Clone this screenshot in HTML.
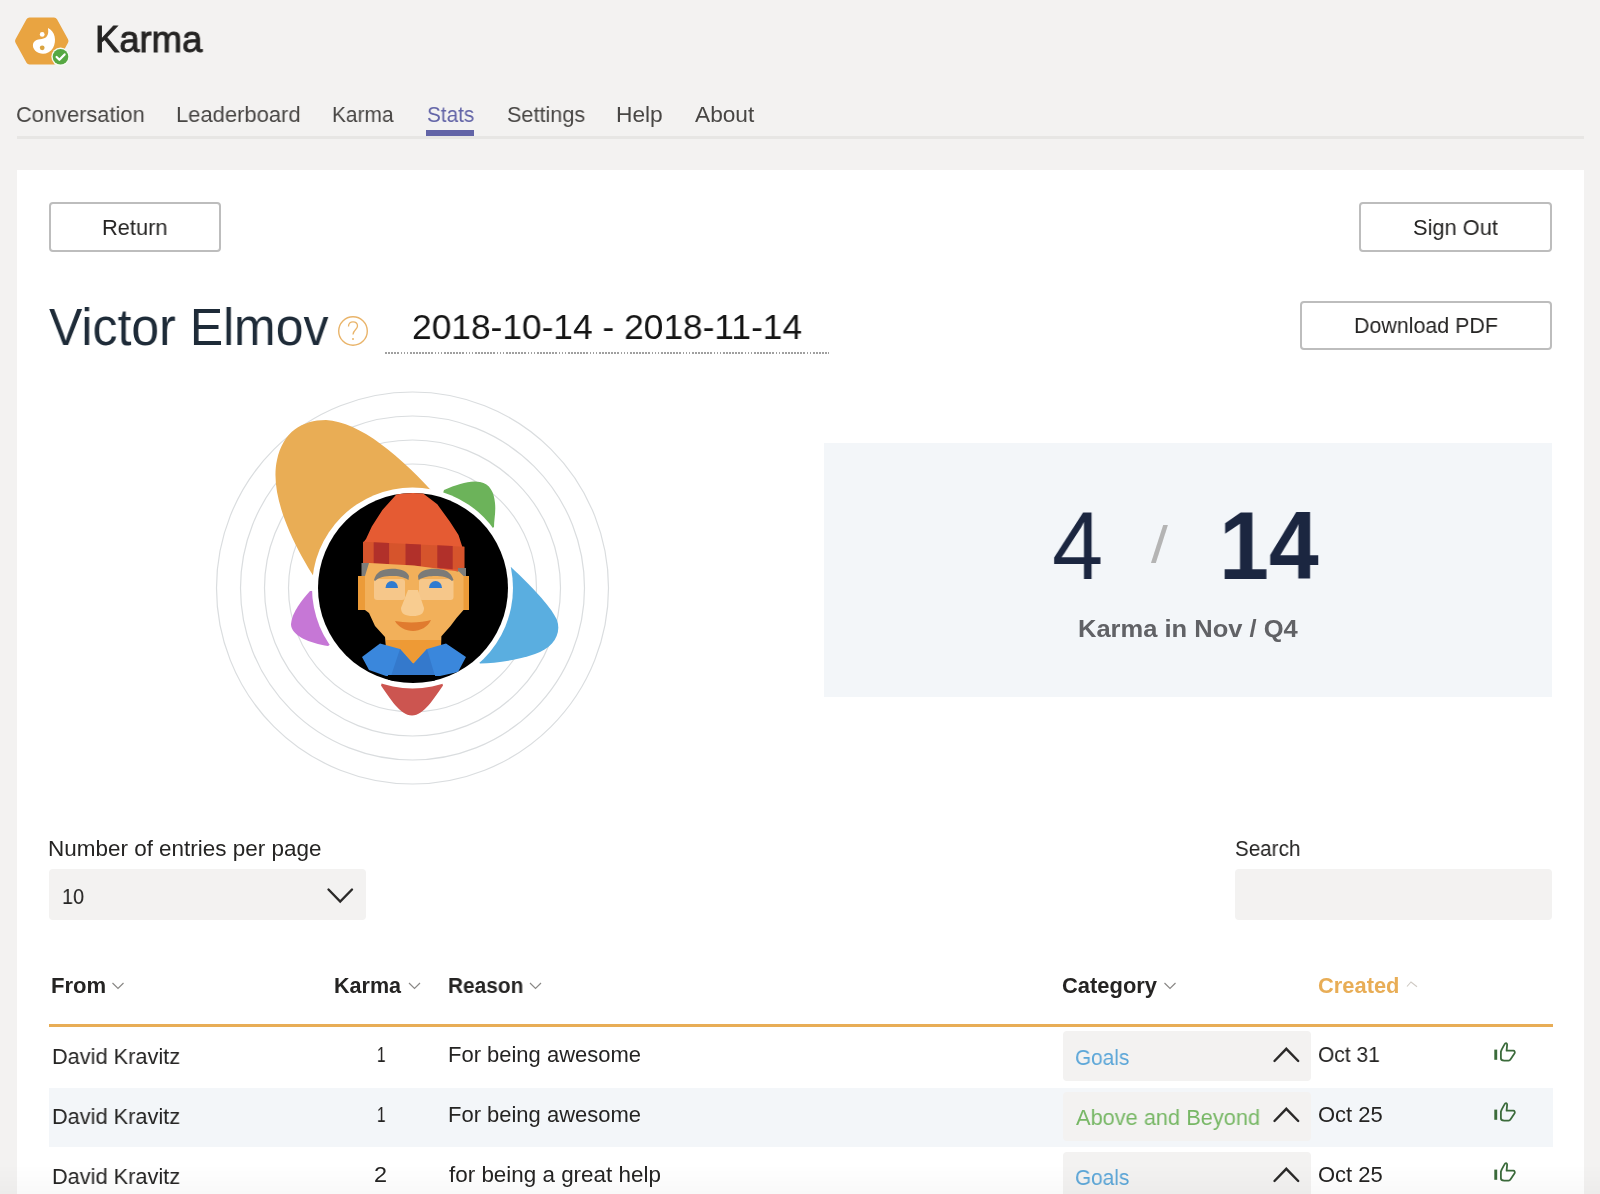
<!DOCTYPE html>
<html><head><meta charset="utf-8">
<style>
html,body{margin:0;padding:0;}
body{width:1600px;height:1194px;overflow:hidden;position:relative;background:#f3f2f1;font-family:"Liberation Sans",sans-serif;}
.t{position:absolute;white-space:nowrap;transform-origin:0 0;will-change:transform;}
.b{position:absolute;box-sizing:border-box;}
</style></head><body>
<!-- logo -->
<svg class="b" style="left:0;top:0" width="90" height="80" viewBox="0 0 90 80">
  <path d="M29.5 17.5 L54 17.5 Q56 17.5 57 19.3 L68 39.3 Q69 41 68 42.7 L57 62.7 Q56 64.5 54 64.5 L29.5 64.5 Q27.5 64.5 26.5 62.7 L15.5 42.7 Q14.5 41 15.5 39.3 L26.5 19.3 Q27.5 17.5 29.5 17.5 Z" fill="#e9a441"/>
  <path d="M48 28 C55 31 57 41 53 48 C50 53 44 55 39 53 C33 51 31 44 35 41 C39 38 45 40 47 36 C49 33 48 30 48 28 Z" fill="#fff"/>
  <circle cx="42.2" cy="34.4" r="2.4" fill="#fff"/>
  <circle cx="42.2" cy="47.8" r="2.4" fill="#d9a441"/>
  <circle cx="60.5" cy="56.8" r="9.2" fill="#f7fbf4"/>
  <circle cx="60.5" cy="56.8" r="7.8" fill="#56a843"/>
  <path d="M56.6 57 L59.4 59.8 L64.6 54.4" stroke="#fff" stroke-width="2.2" fill="none" stroke-linecap="round" stroke-linejoin="round"/>
</svg>
<!-- nav underline + divider -->
<div class="b" style="left:426px;top:130px;width:48px;height:6px;background:#6264a7"></div>
<div class="b" style="left:17px;top:136px;width:1567px;height:2.5px;background:#e7e6e4"></div>
<!-- white panel -->
<div class="b" style="left:17px;top:170px;width:1567px;height:1024px;background:#fff"></div>
<!-- buttons -->
<div class="b" style="left:49px;top:201.5px;width:172px;height:50px;border:2.5px solid #bdbdbd;border-radius:4px"></div>
<div class="b" style="left:1359px;top:202px;width:193px;height:49.5px;border:2.5px solid #bdbdbd;border-radius:4px"></div>
<div class="b" style="left:1300px;top:300.5px;width:252px;height:49.5px;border:2.5px solid #bdbdbd;border-radius:4px"></div>
<!-- question icon -->
<svg class="b" style="left:330px;top:310px" width="46" height="46" viewBox="0 0 46 46">
  <circle cx="23" cy="21" r="14.3" fill="none" stroke="#e9b46a" stroke-width="1.4"/>
  <path d="M18.5 16.5 C18.5 13.5 20.5 11.8 23 11.8 C25.7 11.8 27.5 13.6 27.5 16 C27.5 19.5 23 20 23 24.5" fill="none" stroke="#e9b46a" stroke-width="1.3"/>
  <circle cx="23" cy="29" r="1" fill="#e9b46a"/>
</svg>
<!-- date dotted underline -->
<div class="b" style="left:385px;top:352px;width:444px;height:2px;background:repeating-linear-gradient(to right,#a0a0a0 0,#a0a0a0 1.7px,transparent 1.7px,transparent 3.1px)"></div>
<svg class="b" style="left:0;top:0" width="1600" height="800" viewBox="0 0 1600 800">
  <defs><clipPath id="av"><circle cx="413" cy="588" r="95"/></clipPath></defs>
  <g fill="none" stroke="#dadddf" stroke-width="1.2">
    <circle cx="412.5" cy="588" r="196"/>
    <circle cx="412.5" cy="588" r="172"/>
    <circle cx="412.5" cy="588" r="148"/>
    <circle cx="412.5" cy="588" r="124"/>
  </g>
  <path d="M412.5 588 L330 600 C300 560 268 500 277 460 C283 432 302 420 326 420 C360 422 400 455 440 500 Z" fill="#e9ad55"/>
  <path d="M412.5 588 L444 490 C458 484 470 480 480 482 C490 484 494 492 495 503 C496 512 494 520 494 527 Z" fill="#6cb35a"/>
  <path d="M412.5 588 L511 567 C530 585 550 605 557 620 C562 635 552 648 535 654 C515 661 495 663 480 663.5 Z" fill="#5aaee0"/>
  <path d="M412.5 588 L381 685.5 C390 698 400 715.5 412 715.5 C424 715.5 434 698 443 685.5 Z" fill="#cc5550"/>
  <path d="M412.5 588 L310 591 C302 600 292 612 291 624 C291 636 310 643 328 646 Z" fill="#c677d6"/>
  <circle cx="412.5" cy="588" r="100.5" fill="#fff"/>
  <circle cx="413" cy="588" r="95" fill="#000"/>
  <g clip-path="url(#av)">
    <!-- hat -->
    <path d="M396.8 490 L423.8 490 L423.8 494 L437.3 504.3 L449.8 521.6 L458.5 535 L462.3 546.7 L464.3 546.7 L464.3 572 L363.1 564 L363.1 542.8 L366 539 L371.8 526.4 L382.4 510 L396.8 494 Z" fill="#e55b33"/>
    <path d="M363.1 541.8 L464.3 546.7 L464.3 570 L363.1 563 Z" fill="#d6542c"/>
    <path d="M373.7 542.3 L389.1 543 L389.1 564 L373.7 563.5 Z" fill="#b1302a"/>
    <path d="M405.5 543.8 L420.9 544.5 L420.9 566.2 L405.5 565.2 Z" fill="#b1302a"/>
    <path d="M437.3 545.2 L452.7 546 L452.7 569.2 L437.3 567.7 Z" fill="#b1302a"/>
    <!-- hair -->
    <rect x="361.5" y="563" width="9" height="14" fill="#7d7d7a"/>
    <rect x="458" y="568" width="8" height="10" fill="#7d7d7a"/>
    <!-- ears -->
    <rect x="358" y="576" width="10" height="34" fill="#ec9b38"/>
    <rect x="459" y="576" width="10" height="34" fill="#ec9b38"/>
    <!-- face -->
    <path d="M369 563 L414 565.5 L459 571.5 L463.5 576 L463.5 610 L456.5 618 L450.5 626 L441.4 636.3 L441 648 L386 648 L385 637 L375 626 L369 613 L365 610 L365 576 Z" fill="#f2b05a"/>
    <!-- neck -->
    <path d="M386 640 L441 640 L441 648 L413.3 664 L386 648 Z" fill="#ee9a35"/>
    <!-- shirt -->
    <path d="M362 657 L380 643.5 L400 649 L413.3 664 L427 649 L446 643.5 L466 657 L458 672 L440 676 L386 676 L369 670 Z" fill="#3a87dc"/>
    <path d="M400 649 L413.3 664 L427 649 L435 676 L391 676 Z" fill="#3479cc"/>
    <rect x="388" y="675" width="47" height="6" fill="#000"/>
    <!-- glasses -->
    <rect x="374" y="579" width="31" height="21" rx="3" fill="#f6c78a"/>
    <rect x="419" y="579" width="34.5" height="21" rx="3" fill="#f6c78a"/>
    <!-- eyebrows -->
    <path d="M374 580 C376 572 382 568.8 392 568.8 C401 568.8 407 571 409 576 L408.5 580 C403 576.5 398 576 392 576 C385 576 379 577 375 581 Z" fill="#7b7b78"/>
    <path d="M418 576 C420 571 426 568.8 435 568.8 C445 568.8 451 572 453.5 580 L452 581 C448 577 442 576 435 576 C430 576 424 576.5 418.5 580 Z" fill="#7b7b78"/>
    <!-- eyes -->
    <path d="M385.5 588 A6.2 7 0 0 1 398 588 Z" fill="#2f7bd0"/>
    <path d="M429 588 A6.5 7 0 0 1 442 588 Z" fill="#2f7bd0"/>
    <!-- nose -->
    <path d="M408 590 L418 590 L424 608 C424 614 420 616 413 616 C405 616 401 614 401 608 Z" fill="#f8cc90"/>
    <!-- mouth -->
    <path d="M395 621 C405 623 422 623 431 620 C428 627 420 631 413 631 C406 631 398 627 395 621 Z" fill="#e07b2f"/>
  </g>
</svg>

<!-- stats box -->
<div class="b" style="left:824px;top:443px;width:728px;height:254px;background:#f3f6f9"></div>
<!-- select -->
<div class="b" style="left:49px;top:869px;width:317px;height:50.5px;background:#f3f2f1;border-radius:4px"></div>
<svg class="b" style="left:320px;top:880px" width="40" height="30" viewBox="0 0 40 30">
  <path d="M8.5 9.5 L20.2 21.5 L32 9.5" fill="none" stroke="#2b2a29" stroke-width="2.4" stroke-linecap="round"/>
</svg>
<div class="b" style="left:1235px;top:869px;width:317px;height:50.5px;background:#f3f2f1;border-radius:4px"></div>
<!-- header chevrons -->
<svg class="b" style="left:0;top:970px" width="1600" height="40" viewBox="0 970 1600 40">
  <g fill="none" stroke="#8a8886" stroke-width="1.2">
    <path d="M112.5 983 L118 988.5 L123.5 983"/>
    <path d="M409 983 L414.5 988.5 L420 983"/>
    <path d="M530 983 L535.5 988.5 L541 983"/>
    <path d="M1164.5 983 L1170 988.5 L1175.5 983"/>
  </g>
  <path d="M1407 986.5 L1411 982 L1417 986.7" fill="none" stroke="#cfcac4" stroke-width="1.1"/>
</svg>
<!-- orange rule -->
<div class="b" style="left:48.5px;top:1024px;width:1504px;height:3px;background:#e8ad56"></div>
<!-- row bg -->
<div class="b" style="left:48.5px;top:1088px;width:1504px;height:59px;background:#f3f6f9"></div>
<!-- category boxes -->
<div class="b" style="left:1062.5px;top:1031px;width:248px;height:50px;background:#f3f2f1;border-radius:4px"></div>
<div class="b" style="left:1062.5px;top:1091.5px;width:248px;height:49.5px;background:#f3f2f1;border-radius:4px"></div>
<div class="b" style="left:1062.5px;top:1151.5px;width:248px;height:50px;background:#f3f2f1;border-radius:4px"></div>
<svg class="b" style="left:0;top:1030px" width="1600" height="164" viewBox="0 1030 1600 164">
  <g fill="none" stroke="#2b2a29" stroke-width="2.4" stroke-linecap="round">
    <path d="M1274.5 1061 L1286.3 1048.8 L1298.2 1061"/>
    <path d="M1274.5 1121 L1286.3 1108.8 L1298.2 1121"/>
    <path d="M1274.5 1181 L1286.3 1168.8 L1298.2 1181"/>
  </g>
  <g id="thumbs" fill="none" stroke="#3b6b3b" stroke-width="1.8" stroke-linejoin="round">
    <g transform="translate(1494 1042)"><path d="M6.9 9.6 L6.9 16.3 C6.9 17.6 8.5 18.6 10.2 18.6 L14.6 18.6 C15.6 18.6 16.2 18 16.6 17.2 L20.6 11.3 C21.2 10.2 20.5 8.7 19.5 8.7 L12.6 8.7 L13.1 3.2 C13.3 1.8 12.6 1.1 12 1.1 C11.4 1.1 10.9 1.6 10.5 2.4 L7.8 7.4 Z"/><rect x="0.3" y="7.6" width="2.9" height="10.2" fill="#3b6b3b" stroke="none"/></g>
    <g transform="translate(1494 1102)"><path d="M6.9 9.6 L6.9 16.3 C6.9 17.6 8.5 18.6 10.2 18.6 L14.6 18.6 C15.6 18.6 16.2 18 16.6 17.2 L20.6 11.3 C21.2 10.2 20.5 8.7 19.5 8.7 L12.6 8.7 L13.1 3.2 C13.3 1.8 12.6 1.1 12 1.1 C11.4 1.1 10.9 1.6 10.5 2.4 L7.8 7.4 Z"/><rect x="0.3" y="7.6" width="2.9" height="10.2" fill="#3b6b3b" stroke="none"/></g>
    <g transform="translate(1494 1162)"><path d="M6.9 9.6 L6.9 16.3 C6.9 17.6 8.5 18.6 10.2 18.6 L14.6 18.6 C15.6 18.6 16.2 18 16.6 17.2 L20.6 11.3 C21.2 10.2 20.5 8.7 19.5 8.7 L12.6 8.7 L13.1 3.2 C13.3 1.8 12.6 1.1 12 1.1 C11.4 1.1 10.9 1.6 10.5 2.4 L7.8 7.4 Z"/><rect x="0.3" y="7.6" width="2.9" height="10.2" fill="#3b6b3b" stroke="none"/></g>
  </g>
</svg>
<div class="t" style="left:95.20px;top:21.88px;font-size:36.70px;line-height:36.70px;font-weight:normal;color:#252423;transform:scaleX(0.9927);-webkit-text-stroke:0.9px #252423;">Karma</div>
<div class="t" style="left:16.48px;top:103.36px;font-size:22.67px;line-height:22.67px;font-weight:normal;color:#484644;transform:scaleX(0.9637);">Conversation</div>
<div class="t" style="left:176.28px;top:103.36px;font-size:22.67px;line-height:22.67px;font-weight:normal;color:#484644;transform:scaleX(0.9693);">Leaderboard</div>
<div class="t" style="left:332.37px;top:103.36px;font-size:22.67px;line-height:22.67px;font-weight:normal;color:#484644;transform:scaleX(0.9209);">Karma</div>
<div class="t" style="left:427.15px;top:103.36px;font-size:22.67px;line-height:22.67px;font-weight:normal;color:#6264a7;transform:scaleX(0.9154);">Stats</div>
<div class="t" style="left:506.82px;top:103.36px;font-size:22.67px;line-height:22.67px;font-weight:normal;color:#484644;transform:scaleX(0.9551);">Settings</div>
<div class="t" style="left:616.02px;top:103.36px;font-size:22.67px;line-height:22.67px;font-weight:normal;color:#484644;transform:scaleX(1.0036);">Help</div>
<div class="t" style="left:695.30px;top:103.36px;font-size:22.67px;line-height:22.67px;font-weight:normal;color:#484644;transform:scaleX(1.0011);">About</div>
<div class="t" style="left:102.30px;top:216.51px;font-size:21.97px;line-height:21.97px;font-weight:normal;color:#252423;transform:scaleX(0.9924);">Return</div>
<div class="t" style="left:1413.07px;top:216.51px;font-size:21.97px;line-height:21.97px;font-weight:normal;color:#252423;transform:scaleX(0.9928);">Sign Out</div>
<div class="t" style="left:1354.33px;top:314.79px;font-size:22.11px;line-height:22.11px;font-weight:normal;color:#252423;transform:scaleX(0.9677);">Download PDF</div>
<div class="t" style="left:49.25px;top:302.01px;font-size:51.73px;line-height:51.73px;font-weight:normal;color:#1e2b38;transform:scaleX(0.9659);">Victor Elmov</div>
<div class="t" style="left:412.24px;top:309.83px;font-size:35.76px;line-height:35.76px;font-weight:normal;color:#151515;transform:scaleX(0.9879);">2018-10-14 - 2018-11-14</div>
<div class="t" style="left:1052.16px;top:498.10px;font-size:95.93px;line-height:95.93px;font-weight:normal;color:#1b2640;transform:scaleX(0.9583);">4</div>
<div class="t" style="left:1150.70px;top:519.01px;font-size:52.33px;line-height:52.33px;font-weight:normal;color:#b4b4b4;transform:scaleX(1.1620);">/</div>
<div class="t" style="left:1219.09px;top:498.10px;font-size:95.93px;line-height:95.93px;font-weight:bold;color:#1b2640;transform:scaleX(0.9357);">14</div>
<div class="t" style="left:1078.20px;top:616.63px;font-size:24.66px;line-height:24.66px;font-weight:bold;color:#616266;transform:scaleX(1.0350);">Karma in Nov / Q4</div>
<div class="t" style="left:47.50px;top:837.51px;font-size:21.97px;line-height:21.97px;font-weight:normal;color:#252423;transform:scaleX(1.0225);">Number of entries per page</div>
<div class="t" style="left:62.46px;top:884.68px;font-size:22.82px;line-height:22.82px;font-weight:normal;color:#252423;transform:scaleX(0.8680);">10</div>
<div class="t" style="left:1235.36px;top:837.61px;font-size:21.97px;line-height:21.97px;font-weight:normal;color:#252423;transform:scaleX(0.9383);">Search</div>
<div class="t" style="left:51.12px;top:976.27px;font-size:21.54px;line-height:21.54px;font-weight:bold;color:#252423;transform:scaleX(1.0256);">From</div>
<div class="t" style="left:334.26px;top:976.27px;font-size:21.54px;line-height:21.54px;font-weight:bold;color:#252423;transform:scaleX(0.9933);">Karma</div>
<div class="t" style="left:447.70px;top:976.27px;font-size:21.54px;line-height:21.54px;font-weight:bold;color:#252423;transform:scaleX(0.9679);">Reason</div>
<div class="t" style="left:1062.06px;top:976.27px;font-size:21.54px;line-height:21.54px;font-weight:bold;color:#252423;transform:scaleX(1.0180);">Category</div>
<div class="t" style="left:1317.62px;top:976.27px;font-size:21.54px;line-height:21.54px;font-weight:bold;color:#e8ad56;transform:scaleX(1.0159);">Created</div>
<div class="t" style="left:51.55px;top:1045.61px;font-size:21.97px;line-height:21.97px;font-weight:normal;color:#252423;transform:scaleX(0.9898);">David Kravitz</div>
<div class="t" style="left:376.53px;top:1043.83px;font-size:22.53px;line-height:22.53px;font-weight:normal;color:#252423;transform:scaleX(0.6857);">1</div>
<div class="t" style="left:447.58px;top:1044.31px;font-size:21.97px;line-height:21.97px;font-weight:normal;color:#252423;transform:scaleX(0.9995);">For being awesome</div>
<div class="t" style="left:1074.83px;top:1047.21px;font-size:21.97px;line-height:21.97px;font-weight:normal;color:#5ba6d8;transform:scaleX(0.9449);">Goals</div>
<div class="t" style="left:1317.62px;top:1044.31px;font-size:21.97px;line-height:21.97px;font-weight:normal;color:#252423;transform:scaleX(0.9556);">Oct 31</div>
<div class="t" style="left:51.55px;top:1105.61px;font-size:21.97px;line-height:21.97px;font-weight:normal;color:#252423;transform:scaleX(0.9898);">David Kravitz</div>
<div class="t" style="left:376.53px;top:1103.83px;font-size:22.53px;line-height:22.53px;font-weight:normal;color:#252423;transform:scaleX(0.6857);">1</div>
<div class="t" style="left:447.58px;top:1104.31px;font-size:21.97px;line-height:21.97px;font-weight:normal;color:#252423;transform:scaleX(0.9995);">For being awesome</div>
<div class="t" style="left:1075.80px;top:1107.21px;font-size:21.97px;line-height:21.97px;font-weight:normal;color:#77b765;transform:scaleX(0.9913);">Above and Beyond</div>
<div class="t" style="left:1317.58px;top:1104.31px;font-size:21.97px;line-height:21.97px;font-weight:normal;color:#252423;transform:scaleX(0.9938);">Oct 25</div>
<div class="t" style="left:51.55px;top:1165.61px;font-size:21.97px;line-height:21.97px;font-weight:normal;color:#252423;transform:scaleX(0.9898);">David Kravitz</div>
<div class="t" style="left:374.40px;top:1163.83px;font-size:22.53px;line-height:22.53px;font-weight:normal;color:#252423;transform:scaleX(1.0416);">2</div>
<div class="t" style="left:449.30px;top:1164.31px;font-size:21.97px;line-height:21.97px;font-weight:normal;color:#252423;transform:scaleX(1.0203);">for being a great help</div>
<div class="t" style="left:1074.83px;top:1167.21px;font-size:21.97px;line-height:21.97px;font-weight:normal;color:#5ba6d8;transform:scaleX(0.9449);">Goals</div>
<div class="t" style="left:1317.58px;top:1164.31px;font-size:21.97px;line-height:21.97px;font-weight:normal;color:#252423;transform:scaleX(0.9938);">Oct 25</div>
<div class="b" style="left:0;top:1164px;width:1600px;height:30px;background:linear-gradient(rgba(0,0,0,0),rgba(0,0,0,0.025))"></div>
</body></html>
